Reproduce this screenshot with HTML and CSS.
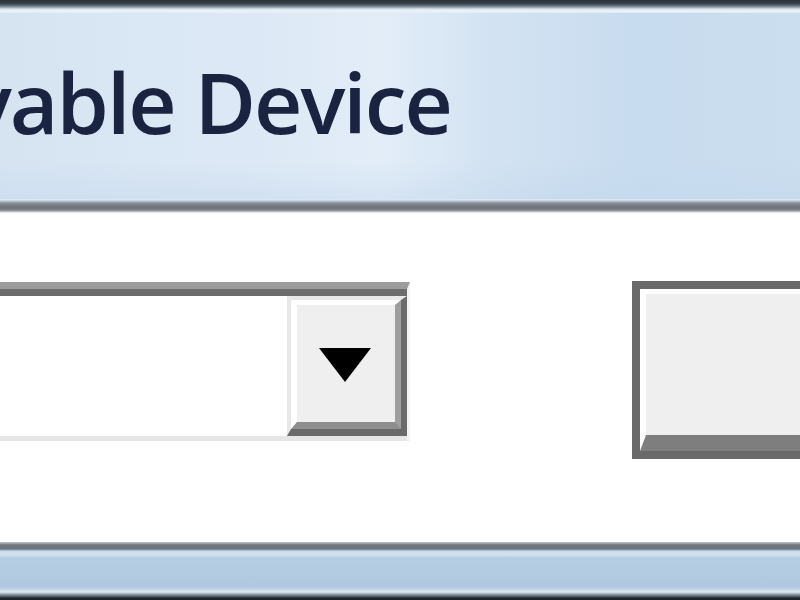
FILE: index.html
```html
<!DOCTYPE html>
<html>
<head>
<meta charset="utf-8">
<link rel="stylesheet" href="styles.css">
</head>
<body>
<div class="window">
  <div class="frame-top"></div>
  <div class="titlebar">
    <span class="title">vable Device</span>
  </div>
  <div class="title-sep"></div>
  <div class="content">
    <div class="combo">
      <div class="combo-inner">
        <div class="field"></div>
        <div class="drop">
          <div class="drop-face">
            <svg class="arrow" width="52" height="34" viewBox="0 0 52 34"><polygon points="0,0 52,0 26,34" fill="#000"/></svg>
          </div>
        </div>
      </div>
    </div>
    <div class="btn">
      <div class="btn-face"></div>
    </div>
  </div>
  <div class="frame-bottom"></div>
</div>
</body>
</html>
```
FILE: styles.css
```css
html, body {
  margin: 0;
  padding: 0;
  width: 800px;
  height: 600px;
  overflow: hidden;
  background: #ffffff;
}
.window {
  display: flex;
  flex-direction: column;
  width: 800px;
  height: 600px;
  overflow: hidden;
  filter: blur(0.7px);
}
.frame-top {
  height: 13px;
  background: linear-gradient(to bottom, #28303a 0px, #3e4650 4px, #8a96a2 7px, #d6e2ee 9px, #eef4fa 11px, #dfeaf5 13px);
}
.titlebar {
  height: 186px;
  background:
    linear-gradient(to bottom, rgba(255,255,255,0) 0%, rgba(255,255,255,0) 80%, rgba(190,212,234,0.35) 100%),
    linear-gradient(to right, #d6e4f2 0%, #dce8f5 30%, #e2edf8 48%, #d2e2f2 62%, #c8dcef 80%, #cbdeef 100%);
  overflow: hidden;
  white-space: nowrap;
}
.title {
  display: block;
  margin-left: -33px;
  padding-top: 46px;
  font-family: "Open Sans", "Noto Sans", sans-serif;
  font-size: 84px;
  font-weight: 600;
  line-height: 85px;
  letter-spacing: -2px;
  color: #1a2440;
}
.title-sep {
  height: 14px;
  background: linear-gradient(to bottom, #e2eef8 0px, #c0ccd8 2px, #8a9098 4px, #6c7278 8px, #7e8288 11px, #c8cacc 13px, #ffffff 14px);
}
.content {
  flex: 1;
  display: flex;
  align-items: flex-start;
  gap: 222px;
  padding-top: 68px;
  background: #ffffff;
}
.combo {
  width: 407px;
  flex: none;
  margin-top: 1px;
  border-top: 7px solid #9c9c9c;
  border-right: 3px solid #f4f4f4;
}
.combo-inner {
  display: flex;
  border-top: 7px solid #6c6c6c;
  border-bottom: 5px solid #e6e6e6;
}
.field {
  flex: 1;
  background: #ffffff;
}
.drop {
  width: 120px;
  height: 140px;
  box-sizing: border-box;
  border-style: solid;
  border-width: 4px 6px 7px 4px;
  border-color: #e8e8e8 #6a6a6a #6a6a6a #e8e8e8;
}
.drop-face {
  height: 100%;
  box-sizing: border-box;
  border-style: solid;
  border-width: 5px 6px 7px 6px;
  border-color: #ffffff #9e9e9e #8e8e8e #ffffff;
  background: #efefef;
  display: flex;
  align-items: center;
  justify-content: center;
}
.arrow {
  display: block;
  margin-top: 2px;
  margin-left: -2px;
}
.btn {
  width: 230px;
  height: 178px;
  flex: none;
  box-sizing: border-box;
  border-style: solid;
  border-width: 8px;
  border-color: #6a6a6a;
}
.btn-face {
  height: 100%;
  box-sizing: border-box;
  border-style: solid;
  border-width: 5px 6px 16px 6px;
  border-color: #ffffff #9e9e9e #7e7e7e #ffffff;
  background: #efefef;
}
.frame-bottom {
  height: 58px;
  flex: none;
  background: linear-gradient(to bottom, #c8ccd0 0px, #6c747c 3px, #6a7680 7px, #c6d8e8 9px, #d6e4f0 12px, #b6cee2 16px, #b0c9e0 45px, #c6d8e8 48px, #e0ecf4 50px, #7a8894 53px, #1e2830 56px, #18202a 58px);
}
```
